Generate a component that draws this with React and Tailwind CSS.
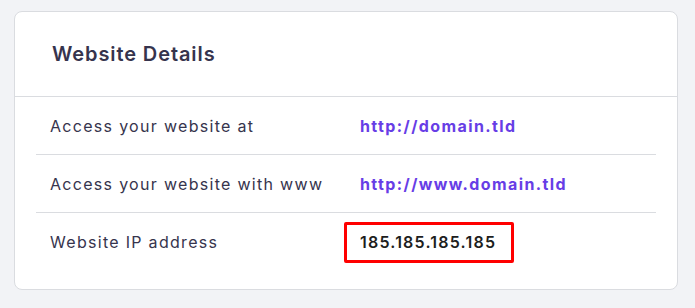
import React from "react";

const rows = [
  { label: "Access your website at", value: "http://domain.tld" },
  { label: "Access your website with www", value: "http://www.domain.tld" },
  { label: "Website IP address", value: "185.185.185.185", highlight: true },
];

export default function App() {
  return (
    <div className="min-h-screen bg-[#f2f3f6] pt-[11px] pl-[14px] font-['Inter',sans-serif]">
      <div className="w-[664px] bg-white border border-[#dadce0] rounded-[8px] pb-[18px]">
        <div className="h-[85px] flex items-center px-[37px] border-b border-[#dadce0]">
          <h2 className="text-[20px] font-semibold text-[#36344d] tracking-[0.9px]">
            Website Details
          </h2>
        </div>
        <div className="px-[21px]">
          {rows.map((row, i) => (
            <div
              key={row.label}
              className={`h-[58px] flex items-center pl-[14px] ${
                i < rows.length - 1 ? "border-b border-[#dadce0]" : ""
              }`}
            >
              <div className="w-[310px] text-[16px] text-[#36344d] tracking-[1.3px]">
                {row.label}
              </div>
              {row.highlight ? (
                <span className="-ml-[16px] border-[3px] border-[#ff0000] rounded-[2px] h-[41px] w-[170px] flex items-center pl-[13px] text-[16px] font-semibold text-[#1d1e20] tracking-[1.2px]">
                  {row.value}
                </span>
              ) : (
                <a className="text-[16px] font-bold text-[#673de6] tracking-[1.4px]">
                  {row.value}
                </a>
              )}
            </div>
          ))}
        </div>
      </div>
    </div>
  );
}
